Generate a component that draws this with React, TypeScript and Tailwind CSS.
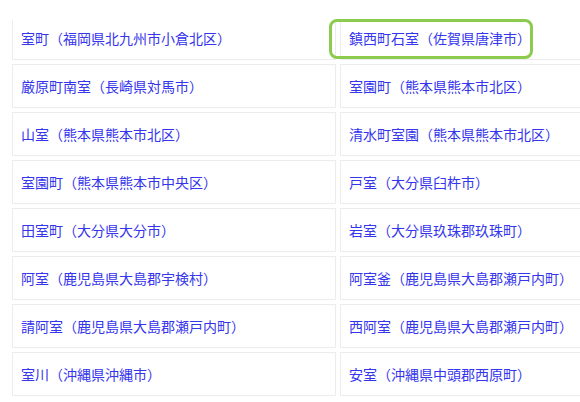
import React from "react";

const items: string[] = [
  "室町（福岡県北九州市小倉北区）",
  "鎮西町石室（佐賀県唐津市）",
  "厳原町南室（長崎県対馬市）",
  "室園町（熊本県熊本市北区）",
  "山室（熊本県熊本市北区）",
  "清水町室園（熊本県熊本市北区）",
  "室園町（熊本県熊本市中央区）",
  "戸室（大分県臼杵市）",
  "田室町（大分県大分市）",
  "岩室（大分県玖珠郡玖珠町）",
  "阿室（鹿児島県大島郡宇検村）",
  "阿室釜（鹿児島県大島郡瀬戸内町）",
  "請阿室（鹿児島県大島郡瀬戸内町）",
  "西阿室（鹿児島県大島郡瀬戸内町）",
  "室川（沖縄県沖縄市）",
  "安室（沖縄県中頭郡西原町）",
];

export default function App() {
  return (
    <div
      className="relative w-[580px] h-[402px] overflow-hidden bg-white"
      style={{ fontFamily: '"Noto Sans CJK JP", "Noto Sans", sans-serif' }}
    >
      <div className="pt-[20px]">
        <div className="overflow-hidden">
          <div className="-mt-[4px] pl-[12px] grid grid-cols-[324px_324px] gap-[4px] w-[680px]">
            {items.map((t, i) => (
              <div
                key={i}
                className="h-[44px] border border-[#ececec] bg-white flex items-center pl-[8px]"
              >
                <a className="text-[14px] leading-none text-[#3535ee] whitespace-nowrap">
                  {t}
                </a>
              </div>
            ))}
          </div>
        </div>
      </div>
      <div className="absolute left-[329px] top-[19px] w-[204px] h-[40px] rounded-[8px] border-[3px] border-[#8ccb4e] pointer-events-none" />
    </div>
  );
}
